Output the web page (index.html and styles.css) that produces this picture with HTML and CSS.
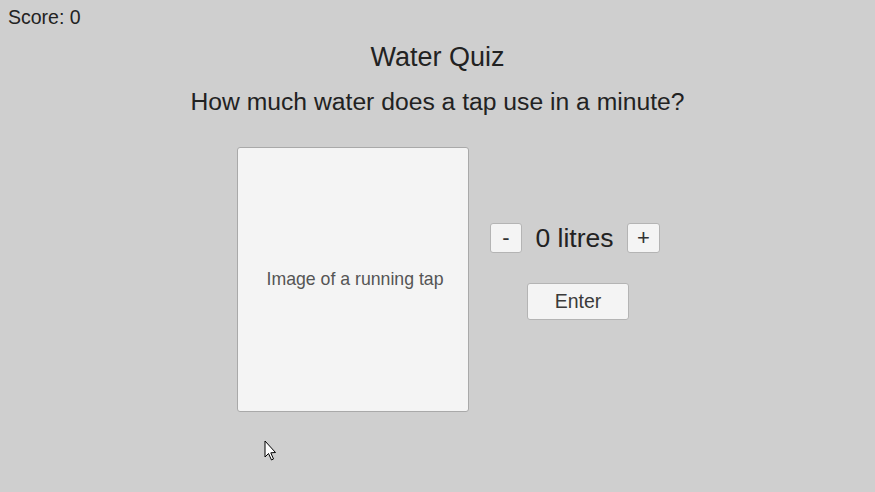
FILE: index.html
```html
<!DOCTYPE html>
<html>
<head>
<meta charset="utf-8">
<link rel="stylesheet" href="styles.css">
</head>
<body>
<div class="score">Score: 0</div>
<div class="title">Water Quiz</div>
<div class="question">How much water does a tap use in a minute?</div>
<div class="main">
  <div class="image-box">Image of a running tap</div>
  <div class="controls">
    <div class="stepper">
      <button class="btn step">-</button>
      <span class="amount">0 litres</span>
      <button class="btn step plus">+</button>
    </div>
    <button class="btn enter">Enter</button>
  </div>
</div>
<svg class="cursor" width="14" height="22" viewBox="0 0 14 22">
  <path d="M1 1 L1 17 L4.5 13.5 L7.5 20 L9.5 19 L6.8 12.8 L11.5 12.5 Z" fill="#fff" stroke="#000" stroke-width="1" stroke-linejoin="miter"/>
</svg>
</body>
</html>
```
FILE: styles.css
```css
html, body {
  margin: 0;
  padding: 0;
}
body {
  width: 875px;
  height: 492px;
  background: #cfcfcf;
  font-family: "Liberation Sans", Arial, sans-serif;
  color: #222;
  position: relative;
  overflow: hidden;
}
.score {
  height: 34px;
  line-height: 34px;
  padding-left: 8px;
  font-size: 19.5px;
}
.title {
  margin-top: 8px;
  line-height: 30px;
  text-align: center;
  font-size: 27px;
}
.question {
  margin-top: 15px;
  line-height: 30px;
  text-align: center;
  font-size: 24.7px;
}
.main {
  margin-top: 30px;
  display: flex;
  justify-content: center;
  padding-left: 22px;
  gap: 21px;
}
.image-box {
  width: 226px;
  height: 263px;
  background: #f4f4f4;
  border: 1px solid #a9a9a9;
  border-radius: 3px;
  display: flex;
  align-items: center;
  justify-content: center;
  font-size: 17.7px;
  color: #555;
  padding: 0 0 0 4px;
  white-space: nowrap;
}
.controls {
  width: 170px;
  padding-top: 76px;
  display: flex;
  flex-direction: column;
  align-items: center;
}
.stepper {
  display: flex;
  align-items: center;
  gap: 13.5px;
  height: 30px;
}
.btn {
  font-family: "Liberation Sans", Arial, sans-serif;
  background: #f4f4f4;
  border: 1px solid #b4b4b4;
  border-radius: 3px;
  padding: 0;
  color: #333;
  box-sizing: border-box;
}
.step {
  width: 32px;
  height: 30px;
  font-size: 22px;
  line-height: 28px;
}
.plus {
  width: 33px;
}
.amount {
  font-size: 26.5px;
  line-height: 30px;
  color: #222;
  white-space: nowrap;
}
.enter {
  margin-top: 30px;
  margin-left: 6px;
  width: 102px;
  height: 37px;
  font-size: 19.5px;
  color: #3a3a3a;
}
.cursor {
  position: absolute;
  left: 264px;
  top: 440px;
}
```
